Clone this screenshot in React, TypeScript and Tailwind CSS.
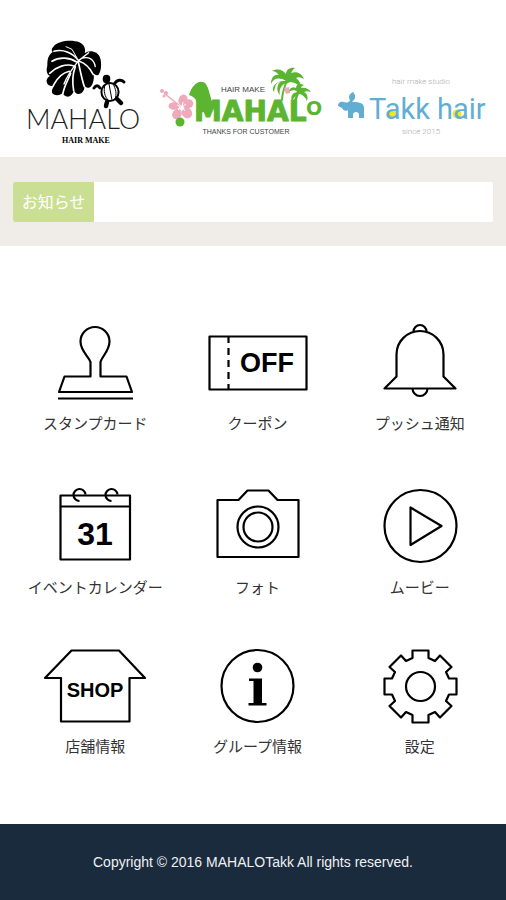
import type { ReactNode } from "react";

function MahaloBlackLogo() {
  return (
    <svg viewBox="0 0 124 108" className="w-[124px] shrink-0" role="img" aria-label="MAHALO HAIR MAKE">
      {/* Monstera leaf */}
      <g transform="translate(22 0) scale(0.333)" fill="none" strokeLinecap="round" strokeLinejoin="round">
        <path
          d="M28 26C42 8 84 4 106 13C122 20 126 36 122 46C136 34 162 40 168 58C174 76 172 100 164 110C158 114 152 110 149 106C152 124 146 144 138 148C130 152 124 148 121 142C124 156 114 168 104 168C96 168 92 162 90 156C88 168 78 178 68 176C60 174 58 170 57 164C48 176 28 174 24 164C22 156 28 148 32 142C22 148 10 142 8 132C6 124 12 118 18 114C8 110 6 96 10 84C10 64 12 52 26 42C22 38 22 32 28 26Z"
          fill="#000"
        />
        <g stroke="#fff" strokeWidth="5">
          <path d="M134 44L104 68C88 88 70 112 60 138" strokeWidth="4" />
          <path d="M103 67C86 44 56 32 30 40" />
          <path d="M98 58L84 34L66 26" strokeWidth="3" />
          <path d="M98 72C76 58 46 56 24 70" />
          <path d="M90 84C66 76 38 86 17 106" />
          <path d="M76 100C56 104 40 120 28 142" />
          <path d="M80 106C74 124 62 140 57 166" />
          <path d="M94 86C86 108 84 130 89 158" />
          <path d="M103 72C108 92 112 118 121 146" />
          <path d="M106 70C124 76 138 90 148 110" />
          <path d="M116 60C134 56 150 62 154 86" strokeWidth="4" />
        </g>
      </g>
      {/* Turtle */}
      <g fill="none" stroke="#000" strokeLinecap="round">
        <ellipse cx="88" cy="54" rx="8.6" ry="9" strokeWidth="2" />
        <path d="M87 46L90 62M83 47C81 53 83 59 86 62M91 46C94 51 95 56 93 61" strokeWidth="1" />
        <path d="M78 50C76 47 74 47 72 50M93 45C95 42 99 41 102 44" strokeWidth="3" />
        <path d="M85 64L84 68M95 61L99 65" strokeWidth="4.5" />
      </g>
      <ellipse cx="84.5" cy="41" rx="3.8" ry="4.2" fill="#000" />
      <text x="61" y="91" textAnchor="middle" className="fill-[#1c1c1c] font-['Lato'] text-[27px] font-light">
        MAHALO
      </text>
      <text x="64" y="105" textAnchor="middle" className="fill-black font-['Liberation_Serif'] text-[8px] font-bold">
        HAIR MAKE
      </text>
    </svg>
  );
}

function MahaloGreenLogo() {
  return (
    <svg viewBox="0 0 164 82" className="w-[164px] shrink-0" role="img" aria-label="HAIR MAKE MAHALO THANKS FOR CUSTOMER">
      {/* Hibiscus */}
      <g fill="#f0a8bb">
        <ellipse cx="24" cy="36" rx="4.5" ry="5.5" transform="rotate(20 24 36)" />
        <ellipse cx="29" cy="40" rx="5.5" ry="4.5" transform="rotate(-25 29 40)" />
        <ellipse cx="28" cy="49" rx="5" ry="5.5" transform="rotate(-35 28 49)" />
        <ellipse cx="18" cy="50" rx="4.5" ry="5.5" transform="rotate(35 18 50)" />
        <ellipse cx="15" cy="42" rx="5.5" ry="3.8" />
        <circle cx="3" cy="27" r="2" />
        <circle cx="7" cy="29" r="2" />
        <circle cx="5" cy="32" r="1.5" />
      </g>
      <path d="M5 29L22 43" stroke="#f0a8bb" strokeWidth="1.6" />
      <path d="M23 43L27 40M23 43L26 47M23 43L19 46M22 43L18 41M23 43L24 38" stroke="#fff" strokeWidth="1" />
      <circle cx="21" cy="58" r="4.5" fill="#5cb531" />
      {/* Palm trees */}
      <g fill="#5cb531">
        <path d="M127 17C120 13 115 14 112 20C112 13 116 10 120 11C117 8 116 7 113 7C119 4 124 6 127 10C127 6 131 3 136 4C134 5 133 7 132 9C138 7 143 10 145 15C141 13 139 13 137 14C141 17 142 20 142 24C139 20 135 18 131 18C129 19 127 20 125 20C121 23 120 27 121 31C117 27 118 21 121 18C116 19 116 24 115 28C111 23 118 16 127 17Z" />
        <path d="M139 28C135 25 132 26 129 29C130 24 134 22 137 24C137 20 141 19 145 21C143 22 142 23 142 24C146 23 150 25 152 28C149 27 147 27 145 28C149 30 149 34 148 37C146 33 144 31 141 30C136 31 135 34 133 37C131 32 134 28 139 28Z" />
        <path d="M30 31C33 21 40 15 46 19C50 23 51 33 55 44L39 50C40 41 39 34 30 31Z" />
      </g>
      <g fill="none" stroke="#5cb531" strokeLinecap="round">
        <path d="M128 16C125 24 123 30 123 36" strokeWidth="2" />
        <path d="M139 28C136 36 134 44 135 55" strokeWidth="2.6" />
      </g>
      <path d="M125 24L130 23L131 29L127 30Z" fill="#f0a8bb" />
      <g className="fill-[#5cb531] font-['DejaVu_Sans'] font-bold">
        <text x="35" y="57" strokeWidth="1" strokeLinejoin="round" className="stroke-[#5cb531] text-[28px]">
          MAHAL
        </text>
        <text x="147" y="51" className="text-[19px]">
          O
        </text>
      </g>
      <text x="84" y="28" textAnchor="middle" className="fill-[#444] font-['Liberation_Sans'] text-[8px]">
        HAIR MAKE
      </text>
      <text x="87" y="70" textAnchor="middle" className="fill-[#444] font-['Liberation_Sans'] text-[7px]">
        THANKS FOR CUSTOMER
      </text>
    </svg>
  );
}

function TakkHairLogo() {
  return (
    <svg viewBox="0 0 152 82" className="w-[152px] shrink-0" role="img" aria-label="Takk hair, hair make studio since 2015">
      <path
        d="M14 36C12 33 13 30 17 28C20 31 20 35 16 38C21 38 27 38 28 43V54H23V50C21 47 18 48 17 50V54H12V46C9 48 7 46 6 44L2 42C2 39 4 37 8 38C10 39 13 39 14 36Z"
        fill="#60aed4"
      />
      <circle cx="56" cy="50" r="4.5" fill="#f4e61c" />
      <circle cx="121" cy="50" r="4.5" fill="#f4e61c" />
      <text x="33" y="55" className="fill-[#60aed4] font-['Roboto'] text-[29px] font-normal">
        Takk hair
      </text>
      <text x="85" y="20" textAnchor="middle" className="fill-[#aaa] font-['Roboto'] text-[8px] font-light">
        hair make studio
      </text>
      <text x="85" y="70" textAnchor="middle" className="fill-[#aaa] font-['Roboto'] text-[8px] font-light">
        since 2015
      </text>
    </svg>
  );
}

const GEAR_POINTS =
  "45.5,9.5 61.5,9.5 61.5,17 68,20 73,14.5 84.5,26 79,31 82,37.5 89.5,37.5 89.5,53.5 82,53.5 79,60 84.5,65 73,76.5 68,71 61.5,74 61.5,81.5 45.5,81.5 45.5,74 39,71 34,76.5 22.5,65 28,60 25,53.5 17.5,53.5 17.5,37.5 25,37.5 28,31 22.5,26 34,14.5 39,20 45.5,17";

const menu: { label: string; href: string; icon: ReactNode }[] = [
  {
    label: "スタンプカード",
    href: "#stamp",
    icon: (
      <>
        <path d="M48.5 58.5V44C47 39 38.5 33 38.5 23.5a14.5 14.5 0 0 1 29 0C67.5 33 59.5 39 58.5 44V58.5H84.5L90 74H17L22.5 58.5Z" />
        <path d="M16 80.5H91" />
      </>
    ),
  },
  {
    label: "クーポン",
    href: "#coupon",
    icon: (
      <>
        <rect x="5.5" y="18.5" width="97" height="53" />
        <path d="M24.5 19V71" strokeDasharray="7 5" strokeDashoffset="1" />
        <text x="63" y="54" textAnchor="middle" stroke="none" className="fill-black text-[27px] font-bold">
          OFF
        </text>
      </>
    ),
  },
  {
    label: "プッシュ通知",
    href: "#push",
    icon: (
      <>
        <path d="M29.5 58.5V36.5a23.5 23.5 0 0 1 47 0V58.5L88.5 70.5H17.5Z" />
        <path d="M46.5 13.5a6.5 6.5 0 0 1 13 0M45.5 70.5a7.5 7.5 0 0 0 15 0" />
      </>
    ),
  },
  {
    label: "イベントカレンダー",
    href: "#calendar",
    icon: (
      <>
        <rect x="18.5" y="13.5" width="69.5" height="64" />
        <path d="M18.5 24.5H88" />
        <path d="M43.5 12.5a6 6 0 1 0 -6 6.5M75.5 12.5a6 6 0 1 0 -6 6.5" />
        <text x="53" y="63" textAnchor="middle" stroke="none" className="fill-black text-[32px] font-bold">
          31
        </text>
      </>
    ),
  },
  {
    label: "フォト",
    href: "#photo",
    icon: (
      <>
        <path d="M13.5 18H34.5L43.5 8.5H64.5L73.5 18H94.5V75H13.5Z" />
        <circle cx="54" cy="45" r="20.5" />
        <circle cx="54" cy="45" r="14.5" />
      </>
    ),
  },
  {
    label: "ムービー",
    href: "#movie",
    icon: (
      <>
        <circle cx="53.5" cy="44" r="36" />
        <path d="M43.5 25.5V63L74.5 44Z" />
      </>
    ),
  },
  {
    label: "店舗情報",
    href: "#shop",
    icon: (
      <>
        <path d="M29.5 9.5H77L103 37H87.5V80.5H19V37H3Z" />
        <text x="53" y="56" textAnchor="middle" stroke="none" className="fill-black text-[20px] font-bold">
          SHOP
        </text>
      </>
    ),
  },
  {
    label: "グループ情報",
    href: "#group",
    icon: (
      <>
        <circle cx="53.5" cy="45" r="36" />
        <circle cx="53.5" cy="26.5" r="4.8" fill="#000" stroke="none" />
        <path d="M45 37.5H58V62H62.5V64.5H44.5V62H49.5V40H45Z" fill="#000" stroke="none" />
      </>
    ),
  },
  {
    label: "設定",
    href: "#settings",
    icon: (
      <>
        <polygon points={GEAR_POINTS} />
        <circle cx="53.5" cy="45.5" r="14.5" />
      </>
    ),
  },
];

export default function App() {
  return (
    <div className="flex min-h-screen flex-col bg-white font-['Liberation_Sans','Noto_Sans_CJK_JP',sans-serif]">
      <header className="flex items-end justify-between pt-[38px] pr-[18px] pb-[11px] pl-[22px]">
        <MahaloBlackLogo />
        <MahaloGreenLogo />
        <TakkHairLogo />
      </header>

      <section className="bg-[#f0ede8] px-[13px] pt-[25px] pb-6">
        <div className="flex h-10 overflow-hidden rounded-xs bg-white">
          <h2 className="flex w-[81px] items-center justify-center bg-[#cbdf94] pt-0.5 text-base text-white">お知らせ</h2>
          <div className="flex-1" aria-live="polite" />
        </div>
      </section>

      <nav className="flex-1 pt-[72px] pr-[5px] pb-10 pl-[14px]">
        <ul className="grid grid-cols-3 grid-rows-[164px_159px_auto]">
          {menu.map((item) => (
            <li key={item.label}>
              <a href={item.href} className="flex flex-col items-center text-[15px] leading-6 text-[#333]">
                <svg
                  viewBox="0 0 106 94"
                  className="h-[94px] w-[106px]"
                  fill="none"
                  stroke="#000"
                  strokeWidth="2.2"
                  strokeLinejoin="round"
                  aria-hidden="true"
                >
                  {item.icon}
                </svg>
                {item.label}
              </a>
            </li>
          ))}
        </ul>
      </nav>

      <footer className="bg-[#1a2b3d] py-7 text-center text-sm text-[#eef1f4]">
        Copyright © 2016 MAHALOTakk All rights reserved.
      </footer>
    </div>
  );
}
